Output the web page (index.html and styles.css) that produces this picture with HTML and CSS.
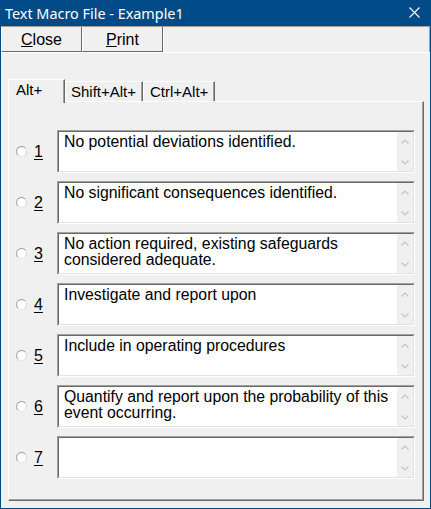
FILE: index.html
```html
<!DOCTYPE html>
<html>
<head>
<meta charset="utf-8">
<title>Text Macro File - Example1</title>
<link rel="stylesheet" href="styles.css">
</head>
<body>
<div class="window">
  <div class="titlebar">
    <span class="title">Text Macro File - Example1</span>
    <svg class="close-x" width="11" height="11" viewBox="0 0 11 11"><path d="M0.5 0.5 L10.5 10.5 M10.5 0.5 L0.5 10.5" stroke="#fff" stroke-width="1.1" fill="none"/></svg>
  </div>
  <div class="toolbar">
    <div class="tbtn"><span><u>C</u>lose</span></div>
    <div class="tbtn"><span><u>P</u>rint</span></div>
    <div class="toolbar-rest"></div>
  </div>
  <div class="content">
    <div class="tabs">
      <div class="tab tab-active tab-alt">Alt+</div>
      <div class="tab tab-shift">Shift+Alt+</div>
      <div class="tab tab-ctrl">Ctrl+Alt+</div>
    </div>
    <div class="panel">
      <div class="row">
        <span class="radio"></span><span class="num">1</span>
        <div class="field"><div class="field-inner"><div class="text">No potential deviations identified.</div><div class="scroll"><svg width="8" height="5" viewBox="0 0 8 5"><path d="M0.5 4.5 L4 1 L7.5 4.5" stroke="#c4c4c4" stroke-width="1.2" fill="none"/></svg><svg width="8" height="5" viewBox="0 0 8 5"><path d="M0.5 0.5 L4 4 L7.5 0.5" stroke="#c4c4c4" stroke-width="1.2" fill="none"/></svg></div></div></div>
      </div>
      <div class="row">
        <span class="radio"></span><span class="num">2</span>
        <div class="field"><div class="field-inner"><div class="text">No significant consequences identified.</div><div class="scroll"><svg width="8" height="5" viewBox="0 0 8 5"><path d="M0.5 4.5 L4 1 L7.5 4.5" stroke="#c4c4c4" stroke-width="1.2" fill="none"/></svg><svg width="8" height="5" viewBox="0 0 8 5"><path d="M0.5 0.5 L4 4 L7.5 0.5" stroke="#c4c4c4" stroke-width="1.2" fill="none"/></svg></div></div></div>
      </div>
      <div class="row">
        <span class="radio"></span><span class="num">3</span>
        <div class="field"><div class="field-inner"><div class="text">No action required, existing safeguards considered adequate.</div><div class="scroll"><svg width="8" height="5" viewBox="0 0 8 5"><path d="M0.5 4.5 L4 1 L7.5 4.5" stroke="#c4c4c4" stroke-width="1.2" fill="none"/></svg><svg width="8" height="5" viewBox="0 0 8 5"><path d="M0.5 0.5 L4 4 L7.5 0.5" stroke="#c4c4c4" stroke-width="1.2" fill="none"/></svg></div></div></div>
      </div>
      <div class="row">
        <span class="radio"></span><span class="num">4</span>
        <div class="field"><div class="field-inner"><div class="text">Investigate and report upon</div><div class="scroll"><svg width="8" height="5" viewBox="0 0 8 5"><path d="M0.5 4.5 L4 1 L7.5 4.5" stroke="#c4c4c4" stroke-width="1.2" fill="none"/></svg><svg width="8" height="5" viewBox="0 0 8 5"><path d="M0.5 0.5 L4 4 L7.5 0.5" stroke="#c4c4c4" stroke-width="1.2" fill="none"/></svg></div></div></div>
      </div>
      <div class="row">
        <span class="radio"></span><span class="num">5</span>
        <div class="field"><div class="field-inner"><div class="text">Include in operating procedures</div><div class="scroll"><svg width="8" height="5" viewBox="0 0 8 5"><path d="M0.5 4.5 L4 1 L7.5 4.5" stroke="#c4c4c4" stroke-width="1.2" fill="none"/></svg><svg width="8" height="5" viewBox="0 0 8 5"><path d="M0.5 0.5 L4 4 L7.5 0.5" stroke="#c4c4c4" stroke-width="1.2" fill="none"/></svg></div></div></div>
      </div>
      <div class="row">
        <span class="radio"></span><span class="num">6</span>
        <div class="field"><div class="field-inner"><div class="text">Quantify and report upon the probability of this event occurring.</div><div class="scroll"><svg width="8" height="5" viewBox="0 0 8 5"><path d="M0.5 4.5 L4 1 L7.5 4.5" stroke="#c4c4c4" stroke-width="1.2" fill="none"/></svg><svg width="8" height="5" viewBox="0 0 8 5"><path d="M0.5 0.5 L4 4 L7.5 0.5" stroke="#c4c4c4" stroke-width="1.2" fill="none"/></svg></div></div></div>
      </div>
      <div class="row">
        <span class="radio"></span><span class="num">7</span>
        <div class="field"><div class="field-inner"><div class="text"></div><div class="scroll"><svg width="8" height="5" viewBox="0 0 8 5"><path d="M0.5 4.5 L4 1 L7.5 4.5" stroke="#c4c4c4" stroke-width="1.2" fill="none"/></svg><svg width="8" height="5" viewBox="0 0 8 5"><path d="M0.5 0.5 L4 4 L7.5 0.5" stroke="#c4c4c4" stroke-width="1.2" fill="none"/></svg></div></div></div>
      </div>
    </div>
  </div>
</div>
</body>
</html>
```
FILE: styles.css
```css
* { box-sizing: border-box; }

html, body {
  margin: 0;
  padding: 0;
  background: #f0f0f0;
}

body {
  width: 431px;
  height: 509px;
  overflow: hidden;
  font-family: "Liberation Sans", Arial, sans-serif;
  color: #000;
}

.window {
  width: 431px;
  height: 509px;
  background: #f0f0f0;
  border: 1px solid #004b87;
  border-top: none;
  display: flex;
  flex-direction: column;
}

.titlebar {
  height: 26px;
  flex: none;
  background: #004b87;
  color: #fff;
  display: flex;
  align-items: center;
  justify-content: space-between;
  padding: 0 10px 0 4px;
  font-family: "Noto Sans", "Open Sans", sans-serif;
  font-size: 14.4px;
}

.title {
  line-height: 20px;
  padding-top: 1px;
}

.close-x {
  display: block;
  margin-bottom: 1px;
}

.toolbar {
  height: 27px;
  flex: none;
  display: flex;
  border-top: 1px solid #a0a0a0;
  border-bottom: 1px solid #ffffff;
}

.tbtn {
  width: 81px;
  height: 25px;
  border-left: 1px solid #ffffff;
  border-right: 1px solid #696969;
  border-bottom: 1px solid #696969;
  display: flex;
  align-items: center;
  justify-content: center;
  font-size: 16px;
  padding-top: 1px;
}

.toolbar-rest {
  flex: 1;
  border-left: 1px solid #ffffff;
  border-right: 1px solid #a0a0a0;
}

.content {
  flex: 1;
  display: flex;
  flex-direction: column;
  padding: 26px 5px 7px 7px;
}

.tabs {
  height: 22px;
  flex: none;
  display: flex;
  align-items: flex-start;
  position: relative;
  z-index: 1;
}

.tab {
  font-size: 15px;
  line-height: 17px;
  background: #f0f0f0;
  border-left: 1px solid #ffffff;
  border-top: 1px solid #ffffff;
  border-right: 1px solid #696969;
  box-shadow: inset -1px 0 0 #a0a0a0;
}

.tab-active {
  width: 57px;
  height: 24px;
  padding: 1px 0 0 7px;
}

.tab-shift {
  width: 78px;
  height: 20px;
  margin-top: 2px;
  padding: 1px 0 0 5px;
}

.tab-ctrl {
  width: 72px;
  height: 20px;
  margin-top: 2px;
  padding: 1px 0 0 6px;
}

.panel {
  flex: 1;
  width: 416px;
  border-top: 1px solid #ffffff;
  border-left: 1px solid #ffffff;
  border-right: 1px solid #696969;
  border-bottom: 1px solid #696969;
  box-shadow: inset -1px -1px 0 #a0a0a0;
  padding: 28px 0 0 7px;
  display: flex;
  flex-direction: column;
  gap: 8px;
}

.row {
  height: 43px;
  display: flex;
  align-items: center;
}

.radio {
  width: 11px;
  height: 11px;
  border-radius: 50%;
  border: 1px solid;
  border-color: #9a9a9a #d8d8d8 #e6e6e6 #a8a8a8;
  background: radial-gradient(circle at 60% 60%, #ffffff 0%, #ffffff 55%, #ececec 100%);
  flex: none;
}

.num {
  width: 23px;
  margin-left: 7px;
  font-size: 16px;
  text-decoration: underline;
  text-underline-offset: 2px;
  padding-top: 1px;
  flex: none;
}

.field {
  width: 358px;
  height: 43px;
  border: 1px solid;
  border-color: #a0a0a0 #ffffff #ffffff #a0a0a0;
  flex: none;
}

.field-inner {
  height: 100%;
  border: 1px solid;
  border-color: #696969 #e3e3e3 #e3e3e3 #696969;
  background: #ffffff;
  display: flex;
}

.text {
  flex: 1;
  font-size: 15.8px;
  line-height: 16px;
  padding: 2px 0 0 5px;
}

.scroll {
  width: 16px;
  flex: none;
  background: #f0f0f0;
  display: flex;
  flex-direction: column;
  align-items: center;
  justify-content: space-between;
  padding: 7px 0 6px 0;
}

.scroll svg {
  display: block;
}
```
